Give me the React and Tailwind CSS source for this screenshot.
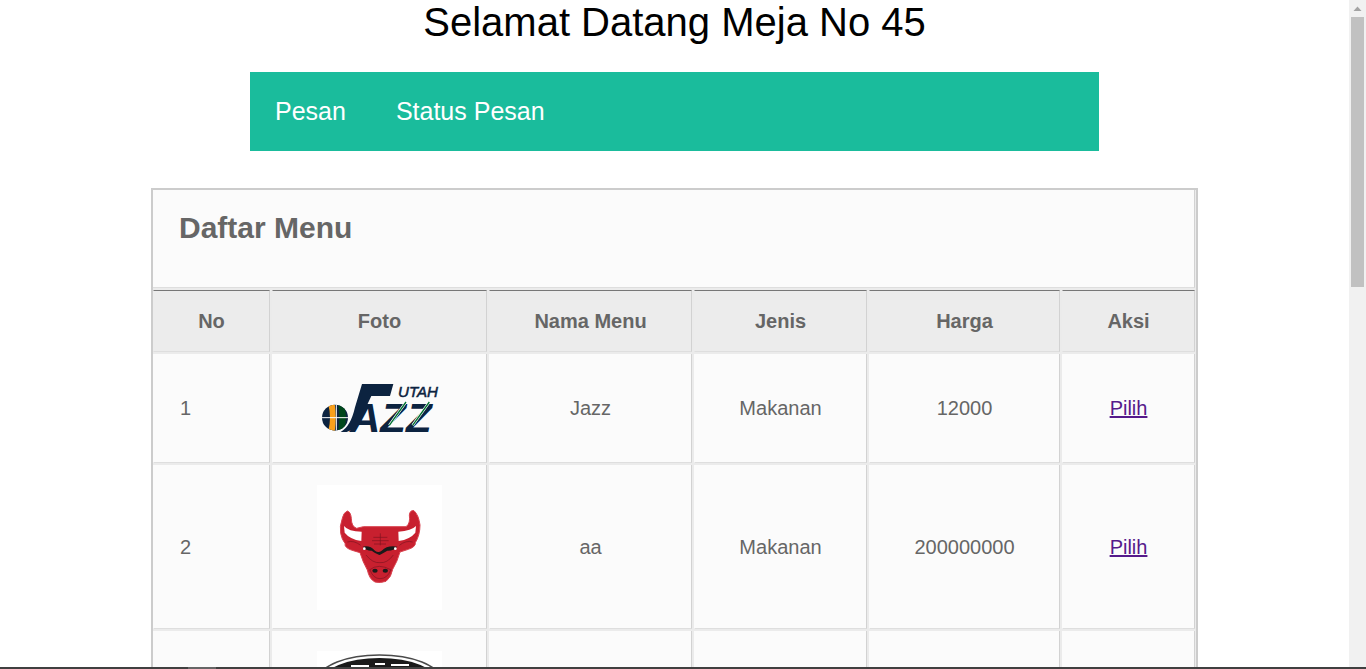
const cellBase = 'border-x border-b border-l-[#fbfbfb] border-r-[#d2d2d2] border-b-[#dedede] bg-[#fbfbfb] text-[20px] text-[#666666] text-center align-middle p-0';
const headBase = 'border-x border-t border-b border-t-[#777777] border-l-[#ececec] border-r-[#d2d2d2] border-b-[#dedede] bg-[#ececec] text-[20px] font-bold text-[#666666] text-center align-middle p-0';

function JazzLogo() {
  return (
    <svg width="160" height="80" viewBox="0 -3 480 240" className="block">
      <defs>
        <clipPath id="ball">
          <circle cx="105" cy="143" r="39" />
        </clipPath>
      </defs>
      <g clipPath="url(#ball)">
        <rect x="60" y="100" width="90" height="86" fill="#0c2340" />
        <path d="M84 100 H104 Q110 143 104 186 H84 Q96 143 84 100 Z" fill="#f9a01b" />
        <path d="M114 100 H130 Q146 143 130 186 H114 Q122 143 114 100 Z" fill="#00471b" />
        <path d="M60 143 H150 M109 100 V186" stroke="#ffffff" strokeWidth="3" />
      </g>
      <path d="M186 42 H280 L270 78 H214 L180 150 Q168 178 140 186 L122 186 Q152 170 165 112 Z" fill="#0c2340" />
      <text x="150" y="185" fontFamily="'Liberation Sans', sans-serif" fontSize="124" fontStyle="italic" fontWeight="700" fill="#0c2340" textLength="245" lengthAdjust="spacingAndGlyphs">AZZ</text>
      <path d="M318 96 L268 166 M388 96 L338 166" stroke="#ffffff" strokeWidth="8" />
      <path d="M318 96 L268 166 M388 96 L338 166" stroke="#00702f" strokeWidth="4" />
      <text x="294" y="80" fontFamily="'Liberation Sans', sans-serif" fontSize="44" fontStyle="italic" fill="#0c2340" stroke="#0c2340" strokeWidth="1.5" textLength="120" lengthAdjust="spacingAndGlyphs">UTAH</text>
    </svg>
  );
}

function BullsLogo() {
  return (
    <svg width="125" height="125" viewBox="21 15 375 375" className="block bg-white">
      <path
        d="M112 93 Q100 98 97 115 Q88 140 92 160 Q96 180 105 190 Q103 205 130 212 L150 218 Q158 245 172 270 Q178 298 195 306 Q210 310 228 304 Q244 292 248 268 Q262 245 270 216 L295 208 Q318 200 316 188 Q330 165 330 135 Q326 105 312 92 Q300 90 298 105 Q302 130 288 140 L160 140 L140 145 Q124 140 124 115 Q122 95 112 93 Z"
        fill="#c8202f"
        stroke="#d9434f"
        strokeWidth="3"
      />
      <path d="M102 138 Q115 155 155 155 L154 183 Q120 178 104 158 Z" fill="#ffffff" />
      <path d="M318 138 Q305 152 265 155 L266 183 Q300 178 316 158 Z" fill="#ffffff" />
      <path d="M158 200 Q180 195 195 212 Q205 220 215 212 Q232 195 262 200 Q250 213 232 212 Q215 222 208 225 Q195 220 185 212 Q170 213 158 200 Z" fill="#1a1a1a" />
      <circle cx="163" cy="206" r="4" fill="#ffffff" />
      <circle cx="256" cy="206" r="4" fill="#ffffff" />
      <ellipse cx="195" cy="272" rx="8" ry="6" fill="#1a1a1a" />
      <ellipse cx="226" cy="272" rx="8" ry="6" fill="#1a1a1a" />
      <path d="M190 172 H232 M186 182 H236 M192 192 H228 M211 160 V196 M112 186 Q132 180 152 196 M308 186 Q288 180 268 196 M168 225 Q188 250 210 248 Q232 250 250 225 M178 270 Q205 248 244 270 M180 270 Q190 296 210 296 Q232 296 242 270" stroke="#7d1420" strokeWidth="2" fill="none" />
    </svg>
  );
}

function WheelLogo() {
  return (
    <svg width="125" height="125" viewBox="0 0 125 125" className="block bg-white">
      <ellipse cx="62.5" cy="28" rx="60" ry="24" fill="none" stroke="#4a4a4a" strokeWidth="1.5" />
      <ellipse cx="62.5" cy="31" rx="58" ry="24" fill="#1a1a1a" />
      <path d="M34 15 H52 M58 13 H68 M74 14 H92" stroke="#ffffff" strokeWidth="2" />
    </svg>
  );
}

const rows = [
  { no: '1', logo: <JazzLogo />, nama: 'Jazz', jenis: 'Makanan', harga: '12000', link: 'Pilih', h: 'h-[109px]' },
  { no: '2', logo: <BullsLogo />, nama: 'aa', jenis: 'Makanan', harga: '200000000', link: 'Pilih', h: 'h-[164px]' },
  { no: '', logo: <WheelLogo />, nama: '', jenis: '', harga: '', link: '', h: 'h-[165px]' },
];

export default function App() {
  return (
    <div className="relative flex h-[669px] overflow-hidden bg-white font-['Liberation_Sans',Arial,sans-serif]">
      <main className="min-w-0 flex-1">
        <h1 className="h-[46px] text-center text-[40px] leading-[44px] font-normal text-black">Selamat Datang Meja No 45</h1>
        <nav className="mx-auto mt-[26px] flex h-[79px] w-[849px] items-center gap-[50px] bg-[#1abc9c] pl-[25px] text-[25px] text-white">
          <a href="#pesan">Pesan</a>
          <a href="#status">Status Pesan</a>
        </nav>
        <div className="mx-auto mt-[37px] w-[1047px] overflow-hidden border-2 border-[#cccccc] bg-[#ebebeb]">
          <table className="-m-[2px] w-[1046px] table-fixed border-separate border-spacing-[2px]">
            <colgroup>
              <col className="w-[117px]" />
              <col className="w-[215px]" />
              <col className="w-[203px]" />
              <col className="w-[173px]" />
              <col className="w-[191px]" />
              <col className="w-[133px]" />
            </colgroup>
            <tbody>
              <tr className="h-[98px]">
                <td colSpan={6} className="border-r border-b border-r-[#d2d2d2] border-b-[#dedede] bg-[#fbfbfb] pb-[23px] pl-[26px] align-middle text-[30px] font-bold text-[#666666]">Daftar Menu</td>
              </tr>
              <tr className="h-[62px]">
                {['No', 'Foto', 'Nama Menu', 'Jenis', 'Harga', 'Aksi'].map((h) => (
                  <th key={h} className={headBase}>{h}</th>
                ))}
              </tr>
              {rows.map((r, i) => (
                <tr key={i} className={r.h}>
                  <td className={`${cellBase} pl-[26px] text-left`}>{r.no}</td>
                  <td className={cellBase}><div className="flex justify-center pt-px">{r.logo}</div></td>
                  <td className={cellBase}>{r.nama}</td>
                  <td className={cellBase}>{r.jenis}</td>
                  <td className={cellBase}>{r.harga}</td>
                  <td className={cellBase}><a href="#pilih" className="text-[#551a8b] underline">{r.link}</a></td>
                </tr>
              ))}
            </tbody>
          </table>
        </div>
      </main>
      <aside className="flex w-[17px] shrink-0 flex-col items-center bg-[#f1f1f1]">
        <svg width="17" height="17" viewBox="0 0 17 17" className="block shrink-0">
          <path d="M8.5 6.5 L12.5 11 H4.5 Z" fill="#a3a3a3" />
        </svg>
        <div className="h-[270px] w-[13px] bg-[#c1c1c1]" />
      </aside>
      <div className="absolute inset-x-0 bottom-0 h-[2px] bg-[#404040]">
        <div className="ml-[188px] h-full w-[28px] bg-[#666666]" />
      </div>
    </div>
  );
}
